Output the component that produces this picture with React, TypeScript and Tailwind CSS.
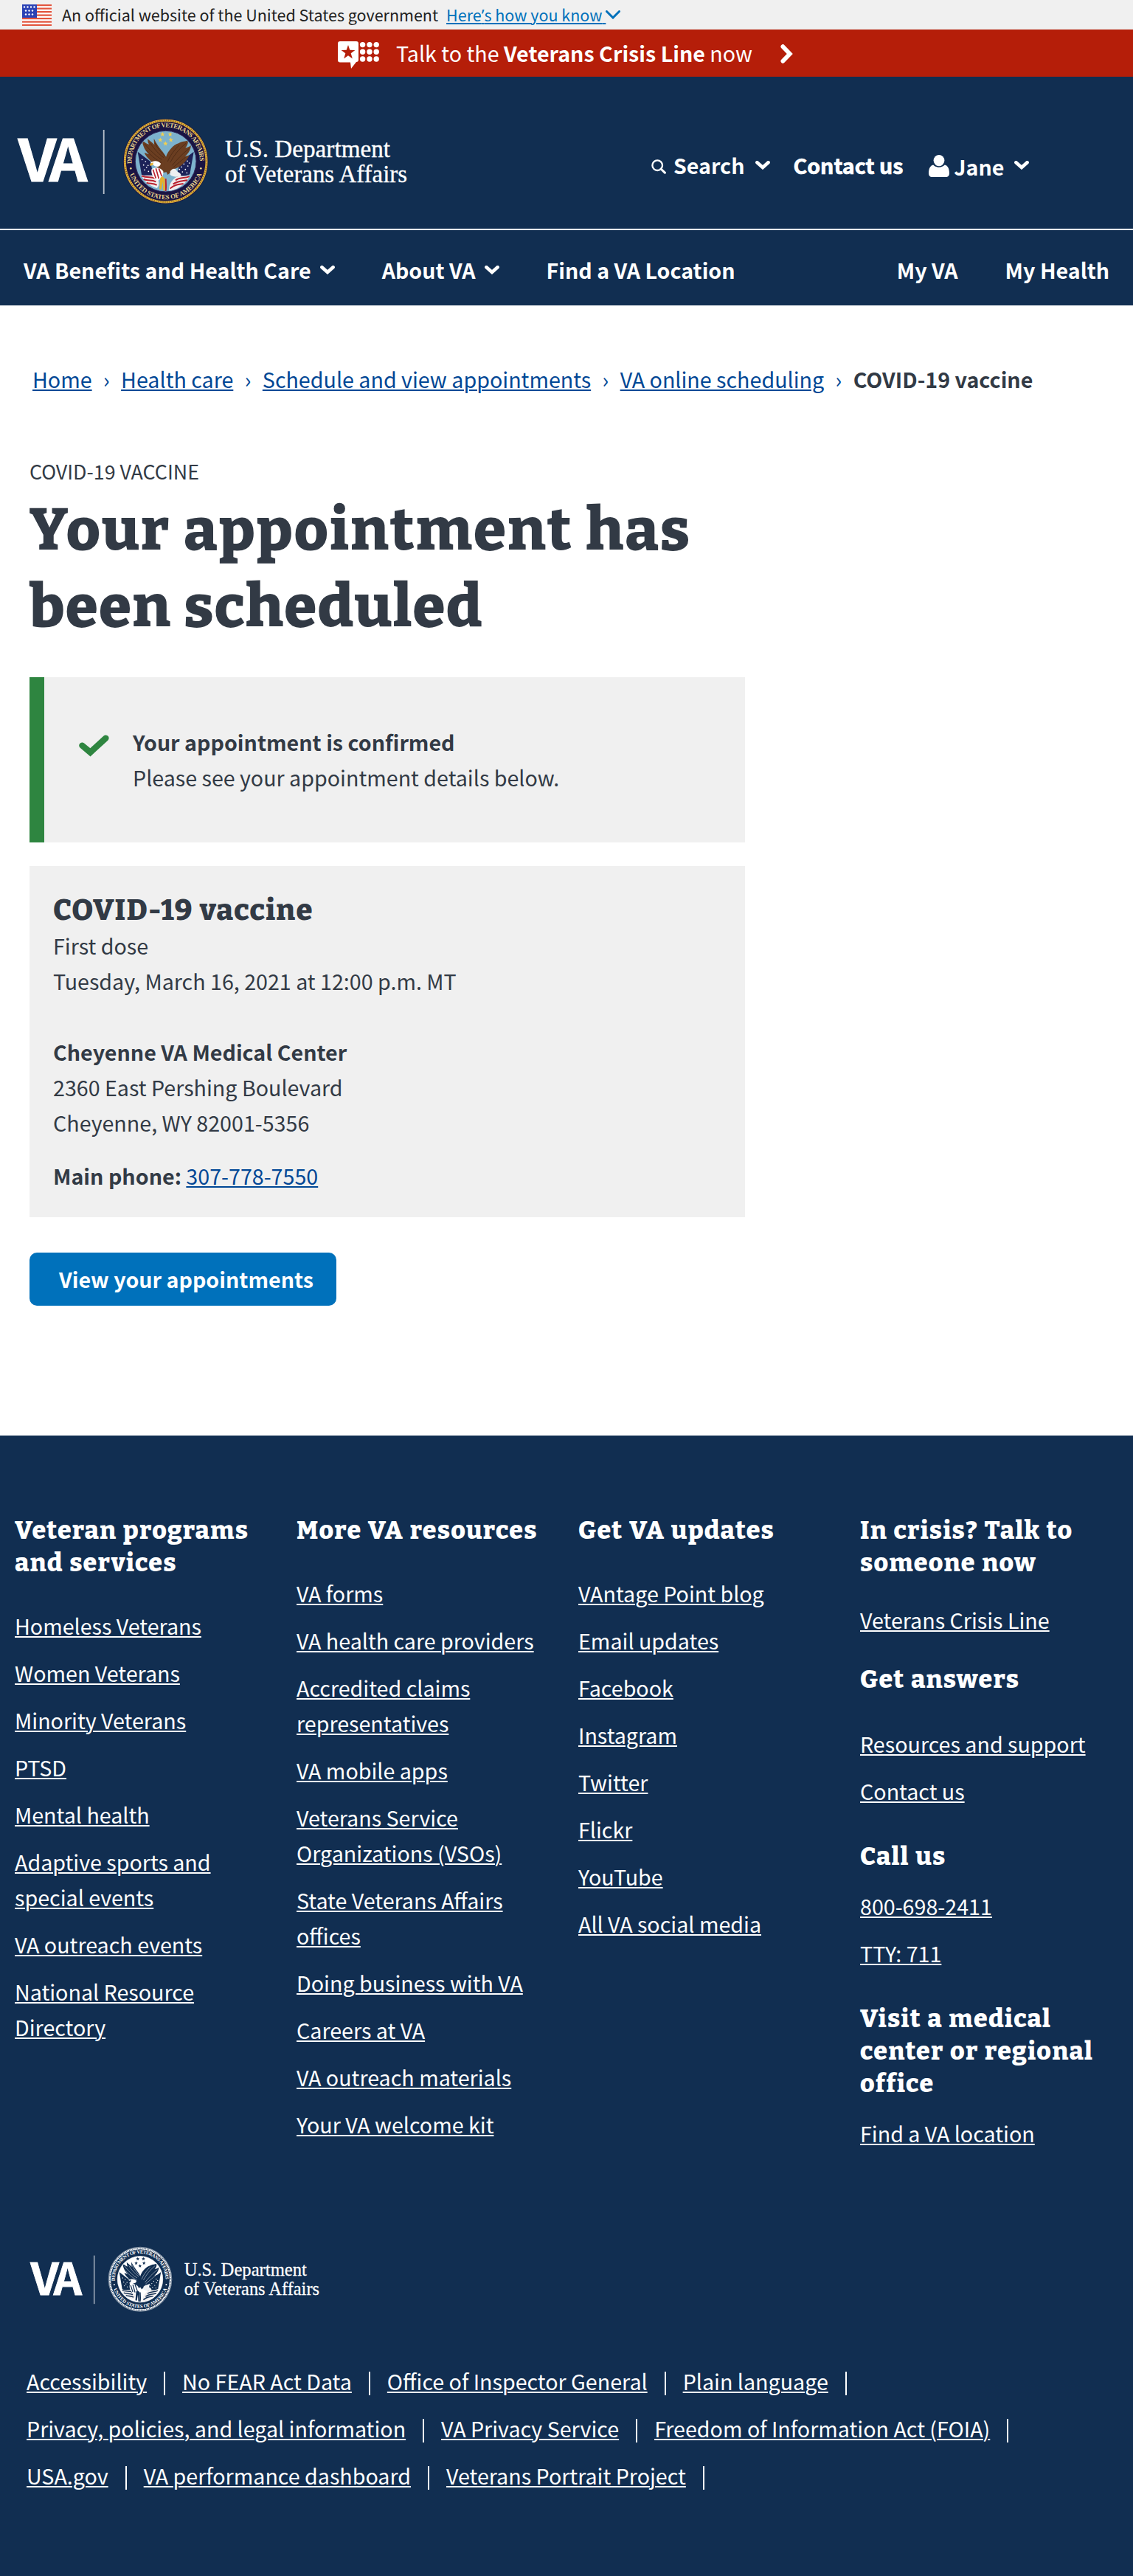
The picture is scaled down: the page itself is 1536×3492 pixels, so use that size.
import type { ReactNode } from "react";

const SANS = "font-['Noto_Sans_CJK_SC','Noto_Sans',sans-serif]";
const SLAB = "font-['Bitter','DejaVu_Serif_Condensed','DejaVu_Serif',serif] font-extrabold";
const UNDERLINE = "underline decoration-2 underline-offset-2";

function Chevron({ className = "" }: { className?: string }) {
  return (
    <svg viewBox="0 0 20 12" className={`h-[12px] w-[20px] shrink-0 ${className}`} fill="none" stroke="currentColor" strokeWidth="4.6">
      <path d="M2.4 2.2 L10 9 L17.6 2.2" strokeLinecap="round" />
    </svg>
  );
}

function UsFlag() {
  return (
    <svg viewBox="0 0 40 29" className="h-[29px] w-[40px] shrink-0">
      <rect width="40" height="29" fill="#fff" />
      {[0, 4.5, 9, 13.5, 18, 22.5, 27].map((y) => (
        <rect key={y} y={y} width="40" height="2.2" fill="#e2543c" />
      ))}
      <rect width="20" height="18" fill="#2b42b5" />
      {[3.5, 8.5, 13.5].map((y, r) =>
        [3, 7.5, 12, 16.5].slice(0, r === 0 ? 4 : 3).map((x) => (
          <circle key={`${x}-${y}`} cx={r === 0 ? x : x + 2} cy={y} r="1.2" fill="#fff" />
        )),
      )}
    </svg>
  );
}

function CrisisIcon() {
  return (
    <svg viewBox="0 0 56 37" className="h-[37px] w-[56px] shrink-0" fill="#fff">
      <path d="M3 0H25a3 3 0 0 1 3 3V25a3 3 0 0 1-3 3L18 37L17 28.5H3a3 3 0 0 1-3-3V3a3 3 0 0 1 3-3Z" />
      <path
        fill="#b51e09"
        d="M14 5 L16.3 11.8 L23.4 11.9 L17.7 16.2 L19.8 23.5 L14 19.2 L8.2 23.5 L10.3 16.2 L4.6 11.9 L11.7 11.8Z"
      />
      {[4.6, 14.3, 24].map((y) => [33.6, 43, 52.2].map((x) => <circle key={`${x}-${y}`} cx={x} cy={y} r="3.7" />))}
    </svg>
  );
}

function SearchIcon() {
  return (
    <svg viewBox="0 0 20 20" className="h-[20px] w-[20px] shrink-0" fill="none" stroke="#fff">
      <circle cx="8.2" cy="8.2" r="6.8" strokeWidth="2.3" />
      <path d="M13 13L18.4 18.2" strokeWidth="3" strokeLinecap="round" />
    </svg>
  );
}

function UserIcon() {
  return (
    <svg viewBox="0 0 28 30" className="h-[30px] w-[28px] shrink-0" fill="#fff">
      <ellipse cx="14" cy="7.6" rx="7.4" ry="7.6" />
      <path d="M6.2 13.6C8 15.6 10.8 16.8 14 16.8S20 15.6 21.8 13.6C26 14.4 28 19 28 25C28 28 26 30 23.4 30H4.6C2 30 0 28 0 25C0 19 2 14.4 6.2 13.6Z" />
    </svg>
  );
}

const STARS = [
  [241, 111],
  [272, 111],
  [232, 134],
  [275, 134],
  [253, 149],
];

/* Department seal; `mono` gives the single-ink version used in the footer. */
function Seal({ mono, id }: { mono?: boolean; id: string }) {
  const navy = mono ? "#112e51" : "#1a1443";
  const gold = mono ? "#ffffff" : "#dcae3c";
  const sky = mono ? "#ffffff" : "#7db2cd";
  const wing = mono ? "#112e51" : "#6b3f22";
  const feather = mono ? "#ffffff" : "#3f2210";
  const union = mono ? "#112e51" : "#1c2258";
  const red = mono ? "#112e51" : "#b9212f";
  const label = mono ? "#ffffff" : "#e6d28e";
  return (
    <g>
      <defs>
        <path id={`${id}-top`} d="M115.9 230.7 A138.5 138.5 0 1 1 392.1 230.7" />
        <path id={`${id}-bottom`} d="M106 269 A156 156 0 0 0 402 269" />
        <clipPath id={`${id}-disc`}>
          <circle cx="254" cy="221" r="121" />
        </clipPath>
      </defs>
      <circle cx="254" cy="221" r="173" fill={navy} />
      <circle cx="254" cy="221" r="166" fill="none" stroke={gold} strokeWidth="9" />
      <circle cx="254" cy="221" r="166" fill="none" stroke={mono ? "#112e51" : "#8a5a14"} strokeWidth="5" strokeDasharray="3 6" />
      {mono && <circle cx="254" cy="221" r="173" fill="none" stroke="#fff" strokeWidth="2" />}
      <circle cx="254" cy="221" r="124" fill={sky} stroke={mono ? "#fff" : "#2f2a5c"} strokeWidth="3" />
      <g fill={label} fontFamily="Liberation Serif, serif" fontWeight="700" fontSize="27">
        <text textLength="446">
          <textPath href={`#${id}-top`} textLength="446">
            DEPARTMENT OF VETERANS AFFAIRS
          </textPath>
        </text>
        <text textLength="380">
          <textPath href={`#${id}-bottom`} startOffset="5" textLength="380">
            UNITED STATES OF AMERICA
          </textPath>
        </text>
      </g>
      <circle cx="112" cy="250" r="4" fill={label} />
      <circle cx="397" cy="250" r="4" fill={label} />
      <g clipPath={`url(#${id}-disc)`}>
        {STARS.map(([x, y]) => (
          <path
            key={`${x}-${y}`}
            transform={`translate(${x} ${y})`}
            d="M0-10L2.6-3.2L9.6-3L4.1 1.4L6 8.2L0 4.4L-6 8.2L-4.1 1.4L-9.6-3L-2.6-3.2Z"
            fill={mono ? "#112e51" : "#f0cf52"}
          />
        ))}
        {/* flags */}
        <path d="M140 182 L192 222 L206 292 L156 276 Z" fill={union} />
        <path d="M368 182 L312 224 L296 292 L352 274 Z" fill={union} />
        <g fill="#fff">
          {[
            [158, 214], [172, 222], [164, 236], [182, 238], [168, 256], [184, 262], [176, 246], [342, 220],
            [328, 232], [344, 240], [318, 244], [334, 254], [350, 228], [322, 264], [340, 268], [310, 254],
          ].map(([x, y]) => (
            <circle key={`${x}-${y}`} cx={x} cy={y} r="2.6" />
          ))}
        </g>
        <path d="M154 276 C178 282 196 274 212 282 C226 290 232 320 218 330 C196 322 170 312 154 276Z" fill="#f2eeee" />
        <path d="M352 278 C332 284 314 276 298 284 C272 300 262 330 270 348 C304 330 336 316 352 278Z" fill="#f2eeee" />
        <g fill="none" stroke={red} strokeWidth="6">
          <path d="M156 280C178 290 194 282 210 290" />
          <path d="M164 294C182 302 196 294 214 304" />
          <path d="M176 308C192 314 202 308 218 318" />
          <path d="M350 282C332 292 314 284 294 298" />
          <path d="M342 298C322 302 304 300 284 314" />
          <path d="M326 312C304 316 288 316 272 332" />
          <path d="M254 292C254 314 258 330 252 348" />
        </g>
        {/* wings and body */}
        <path
          d="M158 134C166 142 176 150 186 152C180 144 182 136 180 130C192 140 200 146 208 154C206 144 206 134 206 128C214 146 230 168 240 180C250 192 258 206 262 222L274 262L240 268L206 232C190 216 168 196 168 186C174 188 182 192 186 192C172 180 160 160 158 134Z"
          fill={wing}
        />
        <path
          d="M344 136C334 142 322 138 306 148C284 154 264 180 256 200L246 240L262 276L290 252C318 244 344 214 350 196C344 198 336 202 332 202C346 190 358 170 356 156C350 162 340 166 334 166C342 158 346 146 344 136Z"
          fill={wing}
        />
        <g fill="none" stroke={feather} strokeWidth="2.5" opacity="0.75">
          <path d="M168 150C190 176 214 200 238 214" />
          <path d="M174 176C192 196 214 214 236 226" />
          <path d="M192 148C208 172 228 194 246 206" />
          <path d="M210 146C220 168 238 188 252 202" />
          <path d="M336 148C310 168 288 196 272 226" />
          <path d="M348 170C322 190 300 214 280 238" />
          <path d="M340 200C320 216 300 232 284 246" />
          <path d="M308 156C288 176 270 200 262 222" />
        </g>
        <path d="M272 262C284 246 296 250 300 262C310 268 318 272 316 280C302 288 284 284 272 276Z" fill="#eef0f2" />
        <path d="M192 228C202 216 224 218 234 230C232 244 216 246 206 238Z" fill="#fff" />
        <path d="M190 230L204 226L202 236L190 240Z" fill={mono ? "#112e51" : "#e7b33a"} />
        {/* shield */}
        <path d="M196 254C212 242 232 246 244 262C246 280 236 292 222 300C206 292 194 276 196 254Z" fill="#fff" />
        <g stroke={red} strokeWidth="5">
          <path d="M202 254L214 290" />
          <path d="M214 250L226 292" />
          <path d="M226 250L238 282" />
        </g>
        <path d="M232 288L240 282L250 290L252 338L244 342L242 304L236 336L228 334Z" fill={mono ? "#112e51" : "#e3b12f"} />
      </g>
    </g>
  );
}

function Logo({ mono, id, className }: { mono?: boolean; id: string; className: string }) {
  return (
    <svg viewBox="0 0 532 122" className={`overflow-visible ${className}`} preserveAspectRatio="none" fill="#fff">
      <g fontFamily="Noto Sans CJK SC, Noto Sans, sans-serif" fontWeight="700" fontSize="78.7" stroke="#fff" strokeWidth="1">
        <text x="0.5" y="88.2" textLength="52" lengthAdjust="spacingAndGlyphs">
          V
        </text>
        <text x="42.5" y="88.2" textLength="52" lengthAdjust="spacingAndGlyphs">
          A
        </text>
      </g>
      <rect x="115.8" y="18" width="1.8" height="87" opacity="0.7" />
      <g transform="translate(116 -13) scale(0.33333)">
        <Seal mono={mono} id={id} />
      </g>
      <g fontFamily="Liberation Serif, serif" fontSize="34.5" fontWeight="400" stroke="#fff" strokeWidth="0.35">
        <text x="281" y="55" textLength="224" lengthAdjust="spacingAndGlyphs">
          U.S. Department
        </text>
        <text x="281" y="88.5" textLength="247" lengthAdjust="spacingAndGlyphs">
          of Veterans Affairs
        </text>
      </g>
    </svg>
  );
}

function Header() {
  return (
    <header className="text-white">
      <div className="flex h-10 items-center bg-[#f0f0f0] pl-[30px] text-[21.5px] leading-10 text-[#212121]">
        <UsFlag />
        <span className="ml-[14px] whitespace-pre">An official website of the United States government</span>
        <a className={`ml-[11px] whitespace-pre text-[#0071bb] ${UNDERLINE}`}>
          Here<span className="font-['Noto_Sans',sans-serif]">’</span>s how you know{" "}
        </a>
        <svg viewBox="0 0 20 12" className="h-[12px] w-[20px]" fill="none" stroke="#0071bb" strokeWidth="3">
          <path d="M1.5 1.5L10 10L18.5 1.5" strokeLinecap="round" />
        </svg>
      </div>
      <div className="flex h-16 items-start bg-[#b51e09] pt-4 pl-[458px] text-[28.65px]">
        <CrisisIcon />
        <p className="-mt-[8px] ml-[23px] whitespace-pre leading-[48px]">
          Talk to the <b className="font-bold">Veterans Crisis Line</b> now
        </p>
        <svg viewBox="0 0 17 26" className="mt-1 ml-[38px] h-[26px] w-[17px]" fill="none" stroke="#fff" strokeWidth="5.8">
          <path d="M3.4 3.2L12.8 13L3.4 22.8" strokeLinecap="round" />
        </svg>
      </div>
      <div className="flex h-[208px] items-start border-b-2 border-white bg-[#112e51] text-[28.6px] font-bold leading-[48px]">
        <Logo id="seal-header" className="mt-[54px] ml-6 h-[122px] w-[532px]" />
        <div className="mt-[96px] ml-[327px] flex items-start">
          <div className="mt-[16px]">
            <SearchIcon />
          </div>
          <span className="ml-[10px]">Search</span>
          <Chevron className="mt-[18px] ml-[15px]" />
          <span className="ml-[31px] [-webkit-text-stroke:0.7px_white]">Contact us</span>
          <div className="mt-[10px] ml-[35px]">
            <UserIcon />
          </div>
          <span className="mt-[2px] ml-[6px]">Jane</span>
          <Chevron className="mt-[18px] ml-[14px]" />
        </div>
      </div>
      <nav className="flex h-[102px] items-start bg-[#112e51] px-8 pt-[30px] text-[28.6px] font-bold leading-[48px]">
        <span>VA Benefits and Health Care</span>
        <Chevron className="mt-[18px] ml-3" />
        <span className="ml-16">About VA</span>
        <Chevron className="mt-[18px] ml-3" />
        <span className="ml-16">Find a VA Location</span>
        <span className="ml-auto">My VA</span>
        <span className="ml-16">My Health</span>
      </nav>
    </header>
  );
}

function Crumb({ children }: { children: ReactNode }) {
  return (
    <>
      <a className={UNDERLINE}>{children}</a>
      <span className="w-[39.5px] text-center">›</span>
    </>
  );
}

function Main() {
  return (
    <main className="h-[1532px] bg-white text-[28.65px] leading-[48px] text-[#323a45]">
      <div className="flex pt-[76px] pl-11 whitespace-nowrap text-[#004795]">
        <Crumb>Home</Crumb>
        <Crumb>Health care</Crumb>
        <Crumb>Schedule and view appointments</Crumb>
        <Crumb>VA online scheduling</Crumb>
        <b className="text-[#323a45]">COVID-19 vaccine</b>
      </div>
      <div className="w-[1010px] pt-[77px] pl-10">
        <p className="text-[26.8px]">COVID-19 VACCINE</p>
        <h1 className={`mt-[3px] text-[80px] leading-[104px] [word-spacing:2px] ${SLAB}`}>
          <span className="block whitespace-nowrap tracking-[1.95px]">Your appointment has</span>
          <span className="block tracking-[1.2px]">been scheduled</span>
        </h1>
        <section className="mt-[44px] flex h-[224px] border-l-[20px] border-[#2e8540] bg-[#f0f0f0] pt-[64px]">
          <svg viewBox="0 0 41 30" className="mt-[14px] ml-[47px] h-[30px] w-[41px] shrink-0" fill="none" stroke="#2e8540" strokeWidth="8.4">
            <path d="M4.4 14.6L15.4 23.8L36.4 4.6" strokeLinecap="round" />
          </svg>
          <div className="ml-[32px]">
            <b className="block">Your appointment is confirmed</b>
            <p>Please see your appointment details below.</p>
          </div>
        </section>
        <section className="mt-8 h-[476px] bg-[#f0f0f0] px-8 pt-9">
          <h2 className={`text-[40px] leading-[48px] tracking-[1.2px] [word-spacing:1px] ${SLAB}`}>COVID-19 vaccine</h2>
          <p>First dose</p>
          <p>Tuesday, March 16, 2021 at 12:00 p.m. MT</p>
          <p className="mt-12 font-bold">Cheyenne VA Medical Center</p>
          <p>2360 East Pershing Boulevard</p>
          <p>Cheyenne, WY 82001-5356</p>
          <p className="mt-6">
            <b>Main phone:</b> <a className={`text-[#004795] ${UNDERLINE}`}>307-778-7550</a>
          </p>
        </section>
        <button className="mt-12 flex h-[72px] w-[416px] items-start rounded-[10px] bg-[#0071bb] pt-[12px] pl-10 font-bold text-white">
          View your appointments
        </button>
      </div>
    </main>
  );
}

function FooterHeading({ children, className = "" }: { children: ReactNode; className?: string }) {
  return (
    <h3 className={`text-[34px] leading-[44px] tracking-[1.2px] [word-spacing:1.5px] ${SLAB} ${className}`}>{children}</h3>
  );
}

function LinkList({ items, className = "" }: { items: string[]; className?: string }) {
  return (
    <ul className={`flex flex-col gap-4 ${className}`}>
      {items.map((item) => (
        <li key={item}>
          <a className={UNDERLINE}>{item}</a>
        </li>
      ))}
    </ul>
  );
}

const PROGRAMS = [
  "Homeless Veterans",
  "Women Veterans",
  "Minority Veterans",
  "PTSD",
  "Mental health",
  "Adaptive sports and special events",
  "VA outreach events",
  "National Resource Directory",
];
const RESOURCES = [
  "VA forms",
  "VA health care providers",
  "Accredited claims representatives",
  "VA mobile apps",
  "Veterans Service Organizations (VSOs)",
  "State Veterans Affairs offices",
  "Doing business with VA",
  "Careers at VA",
  "VA outreach materials",
  "Your VA welcome kit",
];
const UPDATES = [
  "VAntage Point blog",
  "Email updates",
  "Facebook",
  "Instagram",
  "Twitter",
  "Flickr",
  "YouTube",
  "All VA social media",
];
const LEGAL = [
  ["Accessibility", "No FEAR Act Data", "Office of Inspector General", "Plain language"],
  ["Privacy, policies, and legal information", "VA Privacy Service", "Freedom of Information Act (FOIA)"],
  ["USA.gov", "VA performance dashboard", "Veterans Portrait Project"],
];

function Footer() {
  return (
    <footer className="h-[1546px] bg-[#112e51] pt-[107px] text-[28.65px] leading-[48px] text-white">
      <div className="grid h-[991px] grid-cols-[repeat(4,342px)] gap-x-10 pl-5">
        <div>
          <FooterHeading>Veteran programs and services</FooterHeading>
          <LinkList className="mt-[39px]" items={PROGRAMS} />
        </div>
        <div>
          <FooterHeading>More VA resources</FooterHeading>
          <LinkList className="mt-[39px]" items={RESOURCES} />
        </div>
        <div>
          <FooterHeading>Get VA updates</FooterHeading>
          <LinkList className="mt-[39px]" items={UPDATES} />
        </div>
        <div>
          <FooterHeading>In crisis? Talk to someone now</FooterHeading>
          <LinkList className="mt-[31px]" items={["Veterans Crisis Line"]} />
          <FooterHeading className="mt-[35px]">Get answers</FooterHeading>
          <LinkList className="mt-[41px]" items={["Resources and support", "Contact us"]} />
          <FooterHeading className="mt-[43px]">Call us</FooterHeading>
          <LinkList className="mt-[21px]" items={["800-698-2411", "TTY: 711"]} />
          <FooterHeading className="mt-[43px]">Visit a medical center or regional office</FooterHeading>
          <LinkList className="mt-[21px]" items={["Find a VA location"]} />
        </div>
      </div>
      <Logo mono id="seal-footer" className="ml-[41px] h-[92px] w-[395px]" />
      <div className="mt-[68px] flex flex-col gap-4 pl-9">
        {LEGAL.map((row) => (
          <div key={row[0]} className="flex items-center">
            {row.map((item) => (
              <span key={item} className="flex items-center">
                <a className={UNDERLINE}>{item}</a>
                <span className="mx-[23px] mt-[6px] h-8 w-[2px] bg-white" />
              </span>
            ))}
          </div>
        ))}
      </div>
    </footer>
  );
}

export default function App() {
  return (
    <div className={`w-[1536px] antialiased ${SANS}`}>
      <Header />
      <Main />
      <Footer />
    </div>
  );
}
